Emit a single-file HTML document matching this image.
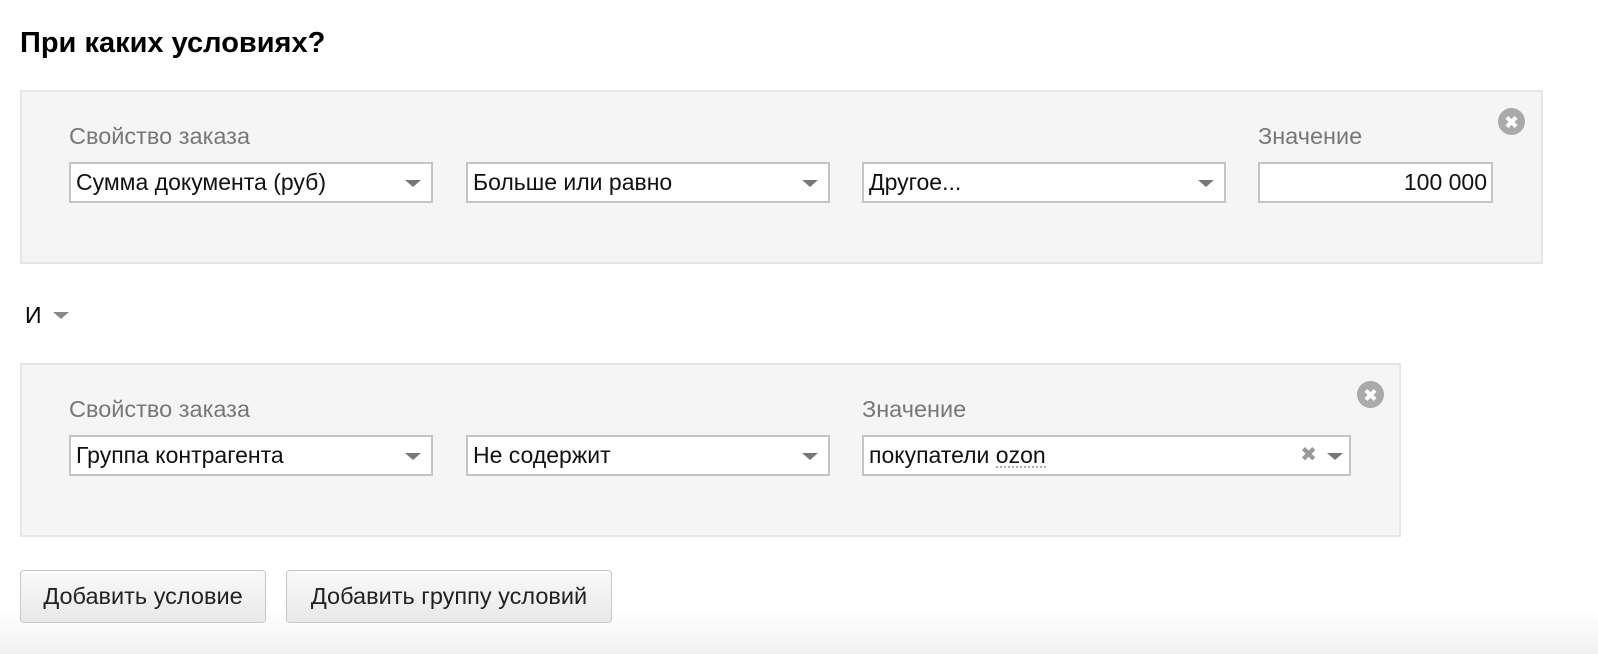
<!DOCTYPE html>
<html><head><meta charset="utf-8"><style>
*{box-sizing:border-box;margin:0;padding:0}
body{width:1598px;height:654px;background:#fff;font-family:"Liberation Sans",Arial,sans-serif;position:relative;overflow:hidden;color:#000}
.abs{position:absolute}
h1{position:absolute;left:20px;top:27px;font-size:29px;font-weight:bold;}
.box{position:absolute;background:#f5f5f5;border:2px solid #e6e6e6}
.lbl{position:absolute;font-size:23.5px;color:#777}
.sel{position:absolute;height:41px;background:#fff;border:2px solid #c4c4c4;font-size:23px;line-height:37px;padding-left:5px;color:#111;white-space:nowrap}
.sel .ar{position:absolute;right:10px;top:16px;width:0;height:0;border-left:8px solid transparent;border-right:8px solid transparent;border-top:7px solid #777}
.cl{position:absolute;width:27px;height:27px;border-radius:50%;background:#aaa}
.cl:before,.cl:after{content:"";position:absolute;left:7px;top:11.5px;width:13px;height:4px;background:#fff;transform:rotate(45deg)}
.cl:after{transform:rotate(-45deg)}
.btn{position:absolute;top:570px;height:53px;border:1px solid #c8c8c8;border-radius:4px;background:linear-gradient(#fafafa,#e8e8e8);font-size:23.5px;line-height:51px;text-align:center;color:#222;white-space:nowrap}
</style></head><body>
<div class="abs" style="left:0;top:610px;width:1598px;height:44px;background:linear-gradient(#fff,#f0f0f0)"></div>
<h1>При каких условиях?</h1>
<div class="box" style="left:20px;top:90px;width:1523px;height:174px"></div>
<div class="lbl" style="left:69px;top:123px">Свойство заказа</div>
<div class="lbl" style="left:1258px;top:123px">Значение</div>
<div class="cl" style="left:1498px;top:108px"></div>
<div class="sel" style="left:69px;top:162px;width:364px">Сумма документа (руб)<span class="ar"></span></div>
<div class="sel" style="left:466px;top:162px;width:364px">Больше или равно<span class="ar"></span></div>
<div class="sel" style="left:862px;top:162px;width:364px">Другое...<span class="ar"></span></div>
<div class="sel" style="left:1258px;top:162px;width:235px;text-align:right;padding-right:4px">100 000</div>
<div class="abs" style="left:25px;top:302px;font-size:23px">И</div>
<div class="abs" style="left:53px;top:312px;border-left:8px solid transparent;border-right:8px solid transparent;border-top:7px solid #888"></div>
<div class="box" style="left:20px;top:363px;width:1381px;height:174px"></div>
<div class="lbl" style="left:69px;top:396px">Свойство заказа</div>
<div class="lbl" style="left:862px;top:396px">Значение</div>
<div class="cl" style="left:1357px;top:381px"></div>
<div class="sel" style="left:69px;top:435px;width:364px">Группа контрагента<span class="ar"></span></div>
<div class="sel" style="left:466px;top:435px;width:364px">Не содержит<span class="ar"></span></div>
<div class="sel" style="left:862px;top:435px;width:489px">покупатели <span style="border-bottom:2px dotted #aaa;line-height:22px;display:inline-block">ozon</span><span class="abs" style="right:32px;top:0;color:#999;font-size:20px">✖</span><span class="ar" style="right:6px"></span></div>
<div class="btn" style="left:20px;width:246px">Добавить условие</div>
<div class="btn" style="left:286px;width:326px">Добавить группу условий</div>
</body></html>
